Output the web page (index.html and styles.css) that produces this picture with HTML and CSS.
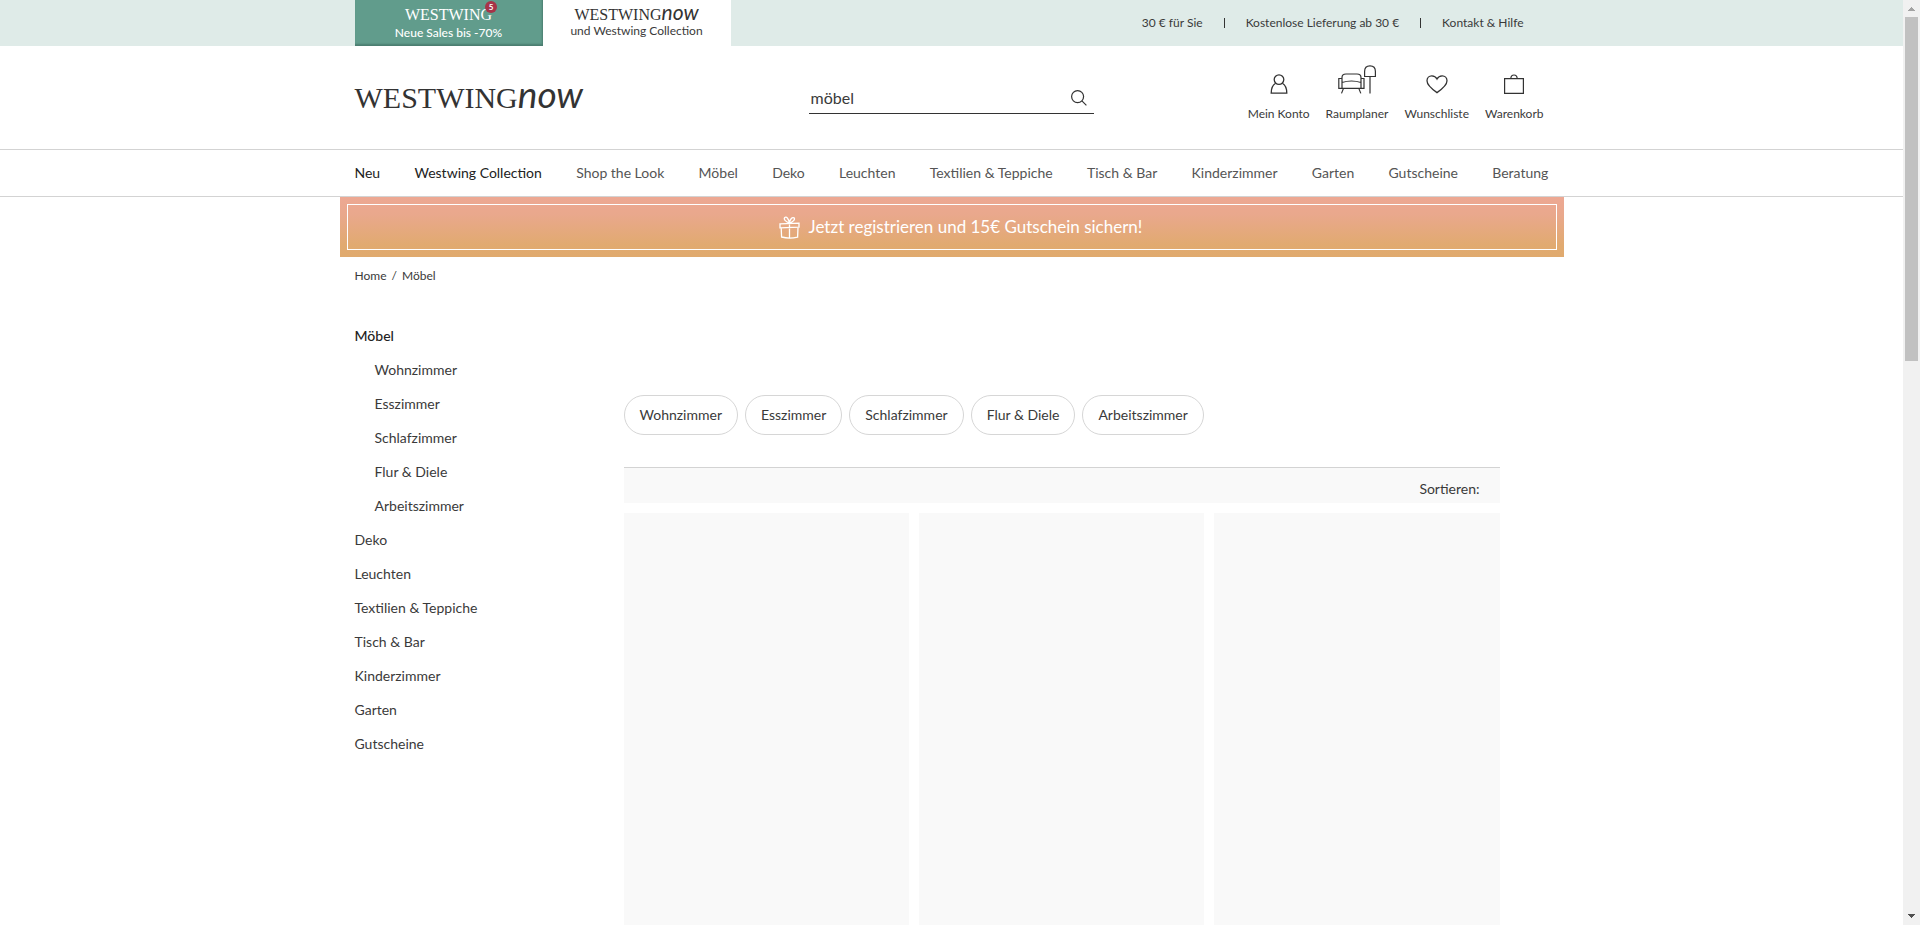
FILE: index.html
```html
<!DOCTYPE html>
<html lang="de">
<head>
<meta charset="utf-8">
<title>Möbel | WestwingNow</title>
<link rel="stylesheet" href="styles.css">
</head>
<body>
<div class="page">
  <div class="topbar">
    <div class="container topbar-inner">
      <a class="shop-tab shop-tab-club" href="#">
        <span class="brand brand-small">WESTWING<span class="badge">5</span></span>
        <span class="tab-text">Neue Sales bis -70%</span>
      </a>
      <a class="shop-tab shop-tab-now" href="#">
        <span class="brand brand-small">WESTWING<span class="brand-now">now</span></span>
        <span class="tab-text">und Westwing Collection</span>
      </a>
      <ul class="service-links">
        <li><a href="#">30 € für Sie</a></li>
        <li><a href="#">Kostenlose Lieferung ab 30 €</a></li>
        <li><a href="#">Kontakt &amp; Hilfe</a></li>
      </ul>
    </div>
  </div>

  <header class="container header">
    <a class="brand brand-large" href="#">WESTWING<span class="brand-now">now</span></a>
    <form class="search">
      <input class="search-input" type="text" value="möbel" aria-label="Suche">
      <button class="search-button" type="button" aria-label="Suchen">
        <svg width="16" height="16" viewBox="0 0 16 16" fill="none" stroke="#333" stroke-width="1.2"><circle cx="6.6" cy="6.6" r="6"/><path d="M10.9 10.9L15.4 15.4"/></svg>
      </button>
    </form>
    <div class="account-links">
      <a class="account-link" href="#">
        <svg width="18" height="20" viewBox="0 0 18 20" fill="none" stroke="#333" stroke-width="1.3"><circle cx="9" cy="5.6" r="4.8"/><path d="M5.6 9.2C2.8 10.8 1.2 13.8 1.2 19.2H16.8C16.8 13.8 15.2 10.8 12.4 9.2"/></svg>
        <span>Mein Konto</span>
      </a>
      <a class="account-link" href="#">
        <svg width="38" height="29" viewBox="0 0 38 29" fill="none" stroke="#333" stroke-width="1.2"><path d="M4 13.5V12.5Q4 9 8 9H19Q23 9 23 12.5V13.5M4 17.5Q13.5 14.5 23 17.5M4 13.5H.8V23.4H26V13.5H23V23M4 13.5V23M5.5 23.4L3.5 28.4M20.8 23.4L22.8 28.4"/><path d="M26.6 11.5V6.5Q26.6 .8 32 .8T37.4 6.5V11.5ZM32 11.5V28.5"/></svg>
        <span>Raumplaner</span>
      </a>
      <a class="account-link" href="#">
        <svg width="22" height="20" viewBox="0 0 22 20" fill="none" stroke="#333" stroke-width="1.3"><path d="M11 18.6C5 14.5 1 11 1 6.8C1 3.7 3.2 1.8 5.8 1.8C8.2 1.8 10 3 11 5C12 3 13.8 1.8 16.2 1.8C18.8 1.8 21 3.7 21 6.8C21 11 17 14.5 11 18.6Z"/></svg>
        <span>Wunschliste</span>
      </a>
      <a class="account-link" href="#">
        <svg width="20" height="20" viewBox="0 0 20 20" fill="none" stroke="#333" stroke-width="1.2"><path d="M.6 4.6H19.4V19.3H.6ZM6.8 4.6Q7 1 10 1T13.2 4.6"/></svg>
        <span>Warenkorb</span>
      </a>
    </div>
  </header>

  <nav class="mainnav">
    <ul class="container mainnav-list">
      <li><a class="strong" href="#">Neu</a></li>
      <li><a class="strong" href="#">Westwing Collection</a></li>
      <li><a href="#">Shop the Look</a></li>
      <li><a href="#">Möbel</a></li>
      <li><a href="#">Deko</a></li>
      <li><a href="#">Leuchten</a></li>
      <li><a href="#">Textilien &amp; Teppiche</a></li>
      <li><a href="#">Tisch &amp; Bar</a></li>
      <li><a href="#">Kinderzimmer</a></li>
      <li><a href="#">Garten</a></li>
      <li><a href="#">Gutscheine</a></li>
      <li><a href="#">Beratung</a></li>
    </ul>
  </nav>

  <a class="promo" href="#">
    <span class="promo-frame">
      <svg width="21" height="23" viewBox="0 0 21 23" fill="none" stroke="#fff" stroke-width="1.3"><path d="M1 7.8L20 7.2V11.2L1 11.8ZM2.2 11.8L2.6 21Q10 23 18.6 21.2L19 11.4M10.5 7.5V22M10.500 7C7 6 4.500 3.500 5.600 1.700C7.200 0 9.600 2.500 10.500 7ZM10.500 7C10.800 3.500 13 .8 15 1.800C16.500 3.500 14 6 10.500 7Z"/></svg>
      <span>Jetzt registrieren und 15€ Gutschein sichern!</span>
    </span>
  </a>

  <div class="container breadcrumb">
    <a href="#">Home</a><span>/</span><span>Möbel</span>
  </div>

  <div class="container main">
    <aside class="sidebar">
      <ul class="categories">
        <li><a class="current" href="#">Möbel</a>
          <ul class="subcategories">
            <li><a href="#">Wohnzimmer</a></li>
            <li><a href="#">Esszimmer</a></li>
            <li><a href="#">Schlafzimmer</a></li>
            <li><a href="#">Flur &amp; Diele</a></li>
            <li><a href="#">Arbeitszimmer</a></li>
          </ul>
        </li>
        <li><a href="#">Deko</a></li>
        <li><a href="#">Leuchten</a></li>
        <li><a href="#">Textilien &amp; Teppiche</a></li>
        <li><a href="#">Tisch &amp; Bar</a></li>
        <li><a href="#">Kinderzimmer</a></li>
        <li><a href="#">Garten</a></li>
        <li><a href="#">Gutscheine</a></li>
      </ul>
    </aside>
    <main class="content">
      <div class="chips">
        <a class="chip" href="#">Wohnzimmer</a>
        <a class="chip" href="#">Esszimmer</a>
        <a class="chip" href="#">Schlafzimmer</a>
        <a class="chip" href="#">Flur &amp; Diele</a>
        <a class="chip" href="#">Arbeitszimmer</a>
      </div>
      <div class="sortbar">Sortieren:</div>
      <div class="products">
        <div class="product"></div>
        <div class="product"></div>
        <div class="product"></div>
      </div>
    </main>
  </div>
</div>
<div class="scrollbar" aria-hidden="true">
  <svg class="arrow" width="17" height="17" viewBox="0 0 17 17"><path fill="#a3a3a3" d="M8 7H9V8H10V9H11V10H12V11H5V10H6V9H7V8H8Z"/></svg>
  <div class="track"><div class="thumb"></div></div>
  <svg class="arrow" width="17" height="17" viewBox="0 0 17 17"><path fill="#505050" d="M5 6H12V7H11V8H10V9H9V10H8V9H7V8H6V7H5Z"/></svg>
</div>
</body>
</html>
```

FILE: styles.css
```css
* {
  box-sizing: border-box;
}

body {
  margin: 0;
  padding-right: 17px;
  background: #fff;
  color: #3a3a3a;
  font: 14px/20px Lato, sans-serif;
}

a {
  color: inherit;
  text-decoration: none;
}

ul {
  margin: 0;
  padding: 0;
  list-style: none;
}

svg {
  display: block;
  flex: none;
}

.page {
  display: flex;
  flex-direction: column;
  min-height: 100vh;
}

.container {
  width: 100%;
  max-width: 1224px;
  margin: 0 auto;
  padding: 0 15px;
}

.topbar {
  background: #dfebe8;
}

.topbar-inner {
  display: flex;
}

.shop-tab {
  display: flex;
  flex-direction: column;
  align-items: center;
  width: 188px;
  height: 46px;
  padding-top: 6px;
}

.tab-text {
  font-size: 12px;
  line-height: 14px;
}

.shop-tab-club {
  background: #619c8c;
  box-shadow: inset -1px -2px 2px #4b7d70;
  color: #fff;
}

.shop-tab-club .tab-text {
  line-height: 18px;
  font-weight: 500;
}

.shop-tab-now {
  background: #fff;
}

.brand {
  color: #333;
  font-family: "Liberation Serif", serif;
  white-space: nowrap;
}

.brand-now {
  font-family: Lato, sans-serif;
  font-style: italic;
  line-height: 1px;
}

.brand-small {
  position: relative;
  font-size: 16px;
  line-height: 18px;
}

.shop-tab-club .brand {
  color: #fff;
}

.brand-small .brand-now {
  font-size: 21px;
}

.brand-large {
  padding-top: 34px;
  font-size: 30px;
  line-height: 36px;
}

.brand-large .brand-now {
  font-size: 37px;
}

.badge {
  position: absolute;
  top: -5px;
  right: -5px;
  width: 12px;
  height: 12px;
  border-radius: 6px;
  background: #a73348;
  font: bold 8px/12px Lato, sans-serif;
  text-align: center;
}

.service-links {
  display: flex;
  align-items: center;
  margin-left: auto;
  padding-right: 25px;
  font-size: 12px;
}

.service-links li {
  display: flex;
  align-items: center;
}

.service-links li + li::before {
  content: "";
  width: 1px;
  height: 10px;
  margin: 0 21px;
  background: #333;
}

.header {
  display: grid;
  grid-template-columns: 454fr 285fr 455fr;
  align-items: start;
  height: 103px;
}

.search {
  display: flex;
  align-items: center;
  height: 34px;
  margin-top: 34px;
  padding-top: 2px;
  border-bottom: 1px solid #333;
}

.search-input {
  flex: 1;
  min-width: 0;
  padding: 0 2px;
  border: 0;
  outline: 0;
  background: none;
  color: #3a3a3a;
  font: 16px/24px Lato, sans-serif;
}

.search-button {
  padding: 0 7px;
  border: 0;
  background: none;
}

.account-links {
  display: flex;
  justify-content: flex-end;
  gap: 16px;
  padding: 19px 5px 0 0;
}

.account-link {
  display: flex;
  flex-direction: column;
  align-items: center;
  justify-content: flex-end;
  gap: 10px;
  height: 59px;
  font-size: 12px;
}

.mainnav {
  border-top: 1px solid #d3d3d3;
  border-bottom: 1px solid #d3d3d3;
}

.mainnav-list {
  display: flex;
  justify-content: space-between;
  color: #555;
  line-height: 46px;
  white-space: nowrap;
}

.strong {
  color: #222;
}

.promo {
  width: 100%;
  max-width: 1224px;
  margin: 0 auto;
  padding: 7px;
  background: linear-gradient(#eda893, #e9a88c 30%, #e1aa70 80%, #e0aa6e);
  color: #fff;
}

.promo-frame {
  display: flex;
  align-items: center;
  justify-content: center;
  gap: 9px;
  height: 46px;
  padding-left: 18px;
  border: 1px solid #fff;
  font-size: 17px;
}

.breadcrumb {
  display: flex;
  gap: 5px;
  padding-top: 9px;
  font-size: 12px;
}

.main {
  display: flex;
  flex: 1;
  padding-top: 33px;
}

.sidebar {
  width: 269px;
  line-height: 34px;
}

.current {
  color: #222;
  font-weight: 500;
}

.subcategories {
  padding-left: 20px;
}

.content {
  display: flex;
  flex: 1;
  flex-direction: column;
  padding: 76px 49px 0 0;
}

.chips {
  display: flex;
  gap: 7px;
  margin-bottom: 32px;
}

.chip {
  padding: 0 15px;
  border: 1px solid #d6d6d6;
  border-radius: 20px;
  line-height: 38px;
}

.sortbar {
  padding: 11px 20px 4px;
  border-top: 1px solid #d3d3d3;
  background: #f9f9f9;
  text-align: right;
}

.products {
  display: grid;
  flex: 1;
  grid-template-columns: repeat(3, 1fr);
  gap: 10px;
  margin-top: 10px;
}

.product {
  background: #f9f9f9;
}

.scrollbar {
  position: fixed;
  top: 0;
  right: 0;
  bottom: 0;
  display: flex;
  flex-direction: column;
  width: 17px;
  background: #f1f1f1;
}

.track {
  flex: 1;
  padding: 0 2px;
}

.thumb {
  height: 38.6%;
  background: #c1c1c1;
}
```
